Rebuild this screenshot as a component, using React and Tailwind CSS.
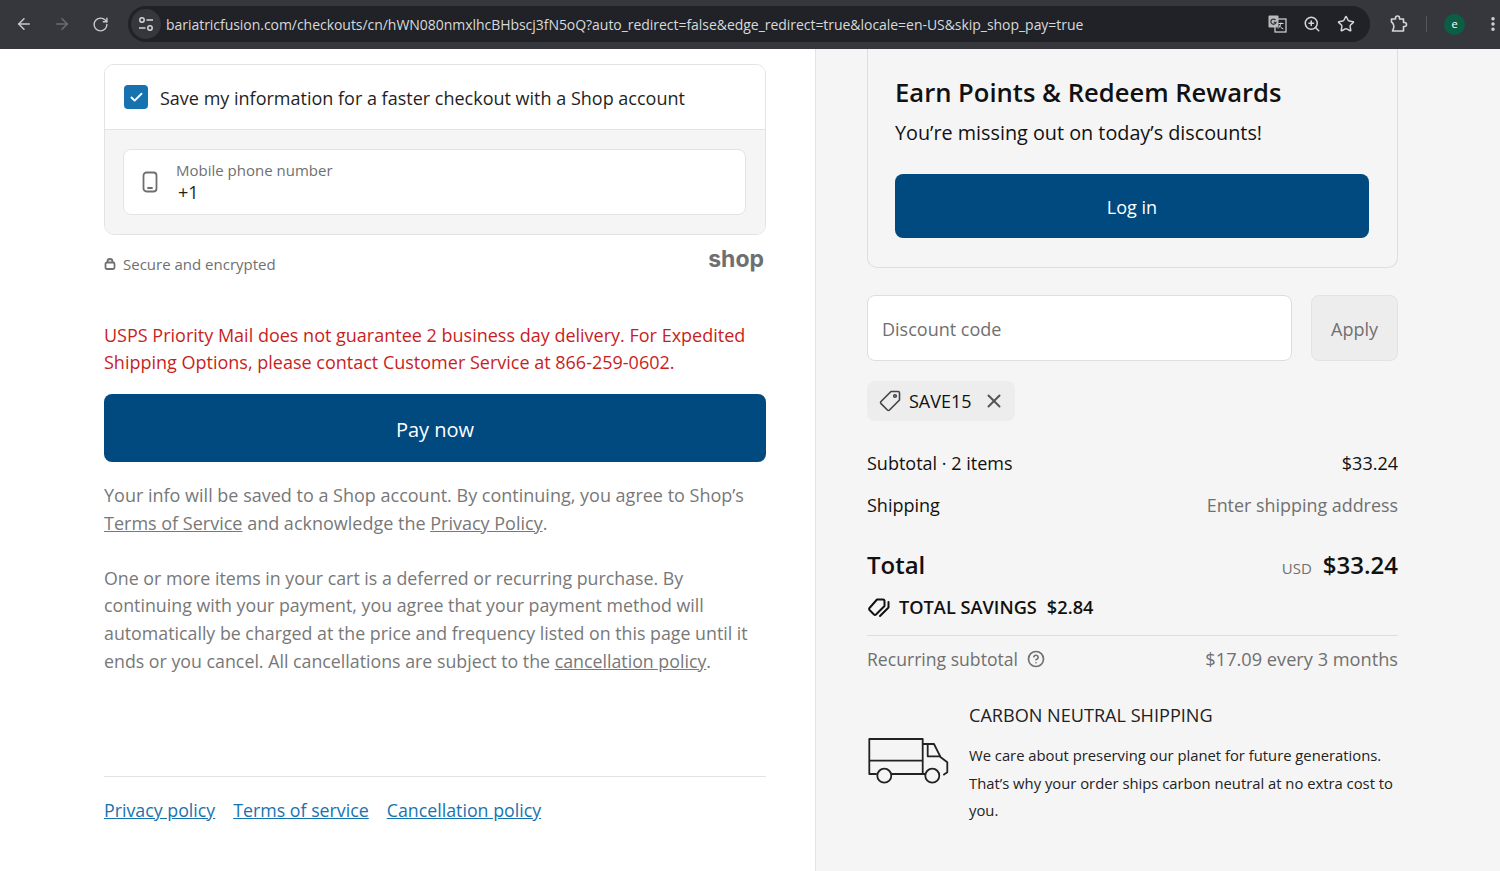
import { ArrowLeft, ArrowRight, RotateCw, ZoomIn, Star, X, Check, EllipsisVertical, CircleHelp } from "lucide-react";

const FONT = "font-['Open_Sans','Noto_Sans',sans-serif]";

function TranslateIcon() {
  return (
    <svg className="w-[19px] h-[18px]" viewBox="0 0 19 18" fill="none">
      <rect x="7" y="4" width="11" height="13" fill="#202227" stroke="#d5d6d8" strokeWidth="1.2" />
      <rect x="0.5" y="0.5" width="10" height="12" rx="1" fill="#b9babd" />
      <path d="M7.5 5A2.6 2.6 0 1 0 8 7.3H5.8" stroke="#35373d" strokeWidth="1.3" />
      <path d="M10.5 8.5h5M13 7.5c-.3 2.5-1.2 4.6-3 6M11.5 10.5c.8 1.6 2 2.7 3.8 3.5" stroke="#d5d6d8" strokeWidth="1" />
    </svg>
  );
}

function SiteSettingsIcon() {
  return (
    <svg className="w-[16px] h-[16px] text-[#d5d6d8]" viewBox="0 0 16 16" fill="none" stroke="currentColor" strokeWidth="1.5">
      <circle cx="4" cy="4" r="2.2" />
      <path d="M8.5 4H15M1 12h6.5" />
      <circle cx="12" cy="12" r="2.2" />
    </svg>
  );
}

function ExtensionIcon() {
  return (
    <svg className="ml-[20px] w-[18px] h-[18px] shrink-0 text-[#d5d6d8]" viewBox="0 0 18 18" fill="none" stroke="currentColor" strokeWidth="1.6" strokeLinejoin="round">
      <path d="M1.5 4h4V3a2 2 0 0 1 4 0v1h4v3.5h1a2 2 0 0 1 0 4h-1V16H2.5l1-2.5c.7-1.7.3-5-2-6.5V4Z" />
    </svg>
  );
}

function BrowserBar() {
  return (
    <div className="h-[49px] shrink-0 flex items-center bg-[#35373d] pb-[1px]">
      <ArrowLeft className="ml-[15px] w-[18px] h-[18px] shrink-0 text-[#c7c9cc]" />
      <ArrowRight className="ml-[20px] w-[18px] h-[18px] shrink-0 text-[#6b6d72]" />
      <RotateCw className="ml-[21px] w-[17px] h-[17px] shrink-0 text-[#c7c9cc]" />
      <div className="ml-[19px] w-[1242px] shrink-0 h-[36px] rounded-full bg-[#202227] flex items-center">
        <div className="ml-[3px] w-[30px] h-[30px] rounded-full bg-[#35373d] flex items-center justify-center">
          <SiteSettingsIcon />
        </div>
        <span className="ml-[5px] text-[14px] text-[#d8d9db] tracking-[-0.04px] whitespace-nowrap">
          bariatricfusion.com/checkouts/cn/hWN080nmxlhcBHbscj3fN5oQ?auto_redirect=false&edge_redirect=true&locale=en-US&skip_shop_pay=true
        </span>
        <div className="ml-auto mr-[15px] flex items-center gap-[16px] text-[#d5d6d8]">
          <TranslateIcon />
          <ZoomIn className="w-[18px] h-[18px]" />
          <Star className="w-[18px] h-[18px]" />
        </div>
      </div>
      <ExtensionIcon />
      <div className="ml-[18px] w-px h-[16px] shrink-0 bg-[#55575c]" />
      <div className="ml-[17px] w-[21px] h-[21px] shrink-0 rounded-full bg-[#0b5d44] flex items-center justify-center text-[11px] text-white">e</div>
      <EllipsisVertical className="ml-[19px] w-[18px] h-[18px] shrink-0 text-[#d5d6d8]" strokeWidth={2.6} />
    </div>
  );
}

function ShopCard() {
  return (
    <div className="rounded-[10px] border border-[#e3e3e3] overflow-hidden">
      <div className="h-[65px] flex items-center px-[19px] border-b border-[#e3e3e3] bg-white">
        <div className="w-[24px] h-[24px] rounded-[4px] bg-[#1773b0] flex items-center justify-center">
          <Check className="w-[15px] h-[15px] text-white" strokeWidth={3} />
        </div>
        <span className="ml-[12px] pt-[2px] text-[18px] text-[#1f1f1f]">Save my information for a faster checkout with a Shop account</span>
      </div>
      <div className="bg-[#f5f5f5] py-[19px] pl-[18px] pr-[19px]">
        <div className="h-[66px] rounded-[8px] border border-[#e3e3e3] bg-white flex items-center">
          <svg className="ml-[17px] w-[18px] h-[22px] text-[#6f6f6f]" viewBox="0 0 18 22" fill="none" stroke="currentColor" strokeWidth="1.8">
            <rect x="2.5" y="1.5" width="13" height="19" rx="3" />
            <path d="M7 17h4" strokeLinecap="round" />
          </svg>
          <div className="ml-[17px]">
            <div className="text-[15px] leading-[20px] text-[#707070]">Mobile phone number</div>
            <div className="pl-[2px] text-[18px] leading-[24px] text-[#1f1f1f]">+1</div>
          </div>
        </div>
      </div>
    </div>
  );
}

function LeftColumn() {
  return (
    <div className="w-[816px] shrink-0 bg-white border-r border-[#e3e3e3] pl-[104px] pr-[49px] pt-[15px]">
      <ShopCard />
      <div className="mt-[12px] flex items-start justify-between">
        <div className="mt-[6px] flex items-center text-[15px] text-[#707070]">
          <svg className="w-[12px] h-[12px] mr-[7px]" viewBox="0 0 12 12" fill="none" stroke="currentColor" strokeWidth="1.8">
            <rect x="1.5" y="4.5" width="9" height="6.5" rx="1.5" />
            <path d="M3.5 4.5V3.5a2.5 2.5 0 0 1 5 0v1" />
          </svg>
          Secure and encrypted
        </div>
        <span className="mr-[2px] font-['Inter',sans-serif] text-[23px] leading-[24px] font-bold text-[#6f6f6f]">shop</span>
      </div>
      <p className="mt-[46px] text-[18px] leading-[27.5px] text-[#c81e1e]">
        USPS Priority Mail does not guarantee 2 business day delivery. For Expedited Shipping Options, please contact Customer Service at 866-259-0602.
      </p>
      <button className="mt-[17px] w-full h-[68px] rounded-[8px] bg-[#004a80] pt-[5px] text-white text-[20px] font-medium">Pay now</button>
      <p className="mt-[19px] text-[18px] leading-[28px] text-[#787878]">
        Your info will be saved to a Shop account. By continuing, you agree to Shop’s <span className="underline">Terms of Service</span> and acknowledge the <span className="underline">Privacy Policy</span>.
      </p>
      <p className="mt-[28px] text-[17.8px] leading-[27.8px] text-[#787878]">
        One or more items in your cart is a deferred or recurring purchase. By continuing with your payment, you agree that your payment method will automatically be charged at the price and frequency listed on this page until it ends or you cancel. All cancellations are subject to the <span className="underline">cancellation policy</span>.
      </p>
      <div className="mt-[100px] pt-[20px] border-t border-[#e3e3e3] flex gap-[18px] text-[17.8px] text-[#1773b0] underline">
        <span>Privacy policy</span>
        <span>Terms of service</span>
        <span>Cancellation policy</span>
      </div>
    </div>
  );
}

function RightColumn() {
  return (
    <div className="flex-1 bg-[#f5f5f5] pl-[51px] pr-[102px] text-[#111111]">
      <div className="h-[219px] rounded-b-[10px] border border-t-0 border-[#dedede] pt-[24px] pl-[27px] pr-[28px]">
        <h2 className="text-[25.6px] leading-[40px] font-semibold">Earn Points & Redeem Rewards</h2>
        <p className="text-[19.8px] leading-[40px]">You’re missing out on today’s discounts!</p>
        <button className="mt-[21px] w-full h-[64px] rounded-[8px] bg-[#004a80] pt-[2px] text-white text-[18px] font-medium">Log in</button>
      </div>
      <div className="mt-[27px] flex gap-[19px]">
        <div className="flex-1 h-[66px] rounded-[8px] border border-[#dedede] bg-white flex items-center pl-[14px] pt-[3px] text-[18px] text-[#707070]">Discount code</div>
        <div className="w-[87px] h-[66px] rounded-[8px] border border-[#e3e3e3] bg-[#ededed] flex items-center justify-center pt-[3px] text-[18px] font-medium text-[#707070]">Apply</div>
      </div>
      <div className="mt-[20px] w-[148px] h-[40px] rounded-[8px] bg-[#ededed] flex items-center pl-[11px]">
        <svg className="w-[24px] h-[24px] text-[#444444]" viewBox="0 0 24 24" fill="none" stroke="currentColor" strokeWidth="1.6" strokeLinejoin="round">
          <path d="M13 2.5h7a1.5 1.5 0 0 1 1.5 1.5v7L11.5 21a1.5 1.5 0 0 1-2.1 0L3 14.6a1.5 1.5 0 0 1 0-2.1L13 2.5Z" />
          <circle cx="17" cy="7" r="1.3" />
        </svg>
        <span className="ml-[7px] text-[18px]">SAVE15</span>
        <X className="ml-[11px] w-[22px] h-[22px] text-[#555555]" strokeWidth={2.2} />
      </div>
      <div className="mt-[28px] flex justify-between text-[18px] leading-[28px]">
        <span>Subtotal · 2 items</span>
        <span>$33.24</span>
      </div>
      <div className="mt-[14px] flex justify-between text-[18px] leading-[28px]">
        <span>Shipping</span>
        <span className="text-[17.9px] text-[#707070]">Enter shipping address</span>
      </div>
      <div className="mt-[28px] flex justify-between items-baseline">
        <span className="text-[24px] leading-[36px] font-semibold">Total</span>
        <span>
          <span className="text-[15px] text-[#707070]">USD</span>
          <span className="ml-[11px] text-[24px] font-semibold">$33.24</span>
        </span>
      </div>
      <div className="mt-[11px] flex items-center text-[18.2px] font-semibold">
        <svg className="w-[24px] h-[22px]" viewBox="0 0 24 22" fill="none" stroke="currentColor" strokeWidth="2" strokeLinejoin="round">
          <path d="M10 2.5h6a1.5 1.5 0 0 1 1.5 1.5v5L9 17.5a1.5 1.5 0 0 1-2 0L2.5 13a1.5 1.5 0 0 1 0-2L10 2.5Z" />
          <path d="M21.5 5v5.5L13 19" strokeLinecap="round" />
        </svg>
        <span className="ml-[8px]">TOTAL SAVINGS</span>
        <span className="ml-[10px]">$2.84</span>
      </div>
      <div className="mt-[14px] pt-[9px] border-t border-[#dedede] flex justify-between leading-[28px] text-[#707070]">
        <span className="flex items-center text-[17.6px]">Recurring subtotal<CircleHelp className="ml-[9px] w-[18px] h-[18px]" strokeWidth={2.2} /></span>
        <span className="text-[18.2px]">$17.09 every 3 months</span>
      </div>
      <div className="mt-[30px] flex">
        <svg className="mt-[34px] ml-[1px] w-[82px] h-[48px] shrink-0 text-[#222222]" viewBox="0 0 82 48" fill="none" stroke="currentColor" strokeWidth="1.8" strokeLinejoin="round">
          <path d="M8.7 37H1.3V2h53.4v35" />
          <path d="M1.3 23.7h53.4" />
          <path d="M23.7 37H57" />
          <path d="M54.7 7H66l6.7 13.3 6.6 5v10l-4 2.7" />
          <path d="M59.7 7v12.3h13" />
          <circle cx="16.3" cy="38.7" r="7" />
          <circle cx="64.3" cy="38.7" r="7" />
        </svg>
        <div className="ml-[19px]">
          <div className="text-[18.1px] leading-[24px] text-[#222222]">CARBON NEUTRAL SHIPPING</div>
          <p className="mt-[15px] text-[14.8px] leading-[27.5px] text-[#222222]">
            We care about preserving our planet for future generations. That’s why your order ships carbon neutral at no extra cost to you.
          </p>
        </div>
      </div>
    </div>
  );
}

export default function App() {
  return (
    <div className={`${FONT} w-[1500px] h-[871px] overflow-hidden flex flex-col`}>
      <BrowserBar />
      <div className="flex-1 flex min-h-0">
        <LeftColumn />
        <RightColumn />
      </div>
    </div>
  );
}
